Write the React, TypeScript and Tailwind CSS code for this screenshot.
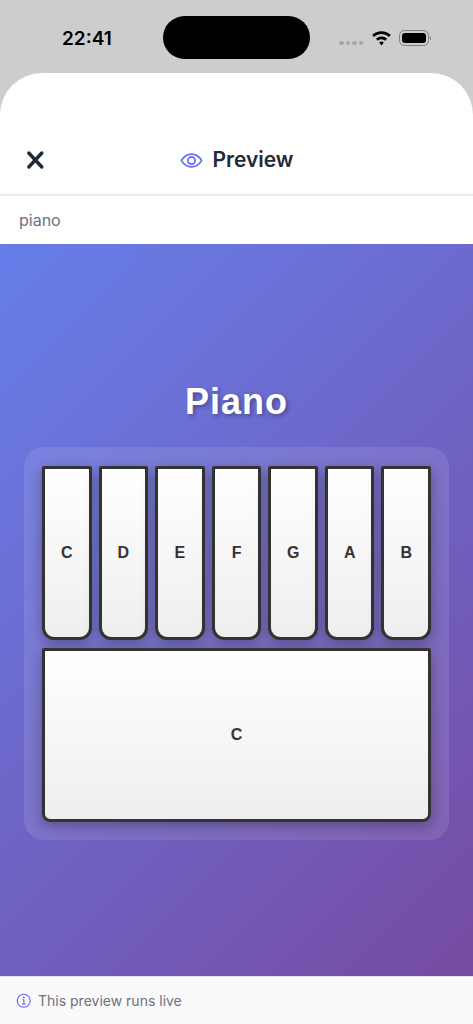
import { IoEyeOutline, IoInformationCircleOutline } from "react-icons/io5";

const topKeys = ["C", "D", "E", "F", "G", "A", "B"];

function StatusIcons() {
  return (
    <div className="flex items-center">
      <div className="flex gap-[2px] mt-[10px] mr-[8px]">
        {[0, 1, 2, 3].map((dot) => (
          <span key={dot} className="w-[4.5px] h-[4.5px] rounded-full bg-[#a6a6a6]" />
        ))}
      </div>
      <svg width="21" height="16" viewBox="0 0 20 15" className="mr-[7px] -mt-[1px]">
        <path d="M10 1c3.4 0 6.5 1.3 8.9 3.5L17.1 6.6A10.6 10.6 0 0 0 10 3.8c-2.7 0-5.2 1-7.1 2.8L1.1 4.5A13 13 0 0 1 10 1z" fill="#000" />
        <path d="M10 6c2 0 3.9.8 5.3 2.1l-1.8 2.1A5.2 5.2 0 0 0 10 8.8c-1.3 0-2.6.5-3.5 1.4L4.7 8.1A7.8 7.8 0 0 1 10 6z" fill="#000" />
        <path d="M10 10.8c.9 0 1.7.3 2.2.9L10 14.6l-2.2-2.9c.5-.6 1.3-.9 2.2-.9z" fill="#000" />
      </svg>
      <div className="flex items-center">
        <div className="w-[30px] h-[16px] rounded-[5.5px] border border-[#7f7f7f] p-[2px]">
          <div className="w-full h-full rounded-[3px] bg-black" />
        </div>
        <span className="w-[1.5px] h-[4px] rounded-r-sm bg-[#7f7f7f] ml-[0.5px]" />
      </div>
    </div>
  );
}

export default function App() {
  return (
    <div className="w-[473px] h-[1024px] flex flex-col overflow-hidden bg-[#cdcdcd] font-['Inter',sans-serif]">
      {/* Status bar */}
      <div className="h-[73px] shrink-0 flex items-start">
        <div className="w-[163px] pt-[26px] pl-[62px] text-[19px] leading-[26px] font-semibold text-black">
          22:41
        </div>
        <div className="w-[147px] h-[43px] mt-[16px] rounded-full bg-black" />
        <div className="flex-1 pt-[30px] pl-[29px]">
          <StatusIcons />
        </div>
      </div>

      {/* Sheet */}
      <div className="flex-1 min-h-0 flex flex-col bg-white rounded-t-[42px]">
        <div className="h-[123px] shrink-0 pt-[71px] px-[24px] flex items-start border-b-2 border-[#ebebeb]">
          <div className="relative flex-1 flex items-center justify-center h-[32px] gap-[10px]">
            <svg width="20" height="20" viewBox="0 0 20 20" className="absolute left-[1px] top-[6px] text-[#1f2937]">
              <path d="M3.8 3l13 14M16.8 3L3.8 17" fill="none" stroke="currentColor" strokeWidth="3.4" strokeLinecap="round" />
            </svg>
            <IoEyeOutline size={23} className="text-[#6668f5] [&_path]:[stroke-width:38px] [&_circle]:[stroke-width:38px]" />
            <span className="text-[21px] font-semibold text-[#1f2937] leading-[28px]">Preview</span>
          </div>
        </div>

        <div className="h-[48px] shrink-0 px-[19px] flex items-center text-[16px] text-[#6b7280]">piano</div>

        {/* Preview area */}
        <div className="flex-1 min-h-0 flex flex-col items-center justify-center bg-[linear-gradient(135deg,#667eea_0%,#764ba2_100%)] font-['Liberation_Sans',sans-serif]">
          <h1 className="text-[36px] leading-[43px] font-bold tracking-[1px] text-white mb-[24px] [text-shadow:2px_2px_4px_rgba(0,0,0,0.3)]">
            Piano
          </h1>
          <div className="w-[425px] rounded-[20px] bg-white/10 px-[18px] pt-[19px] pb-[18px] flex flex-col gap-[8px]">
            <div className="flex gap-[7px]">
              {topKeys.map((note) => (
                <div
                  key={note}
                  className="flex-1 h-[174px] flex items-center justify-center rounded-t-[2px] rounded-b-[12px] border-[3px] border-[#333] bg-[linear-gradient(180deg,#ffffff_0%,#eeeeee_100%)] text-[16px] font-bold text-[#333] shadow-[0_4px_14px_rgba(0,0,0,0.3)]"
                >
                  {note}
                </div>
              ))}
            </div>
            <div className="h-[174px] flex items-center justify-center rounded-t-[2px] rounded-b-[8px] border-[3px] border-[#333] bg-[linear-gradient(180deg,#ffffff_0%,#eeeeee_100%)] text-[16px] font-bold text-[#333] shadow-[0_4px_14px_rgba(0,0,0,0.3)]">
              C
            </div>
          </div>
        </div>

        {/* Footer */}
        <div className="h-[48px] shrink-0 border-t border-[#e5e5e5] bg-[#fafafa] pl-[15px] flex items-center gap-[5px] text-[14px] text-[#6b7280]">
          <IoInformationCircleOutline size={18} className="text-[#6668f5]" />
          <span>This preview runs live</span>
        </div>
      </div>
    </div>
  );
}
